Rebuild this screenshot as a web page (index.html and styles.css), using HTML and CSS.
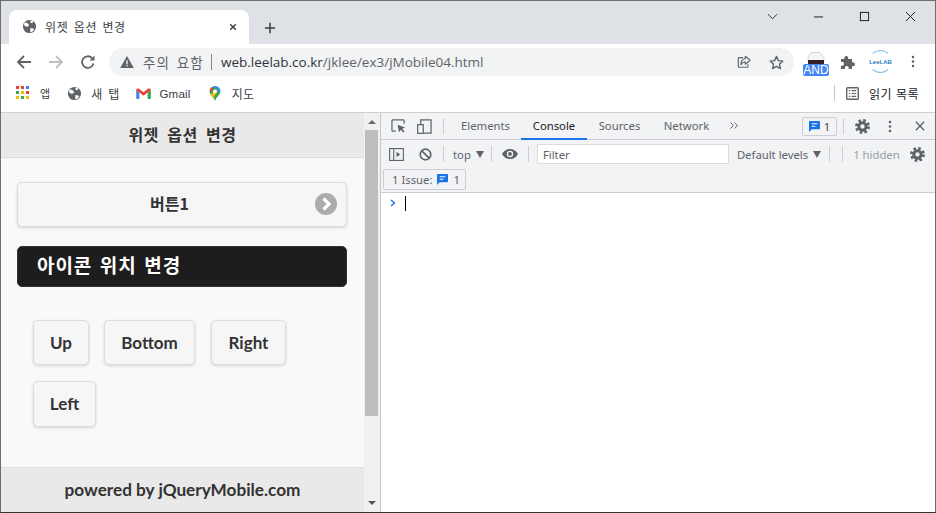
FILE: index.html
```html
<!DOCTYPE html>
<html lang="ko">
<head>
<meta charset="utf-8">
<title>위젯 옵션 변경</title>
<link rel="stylesheet" href="styles.css">
</head>
<body>
<div class="window">
  <div class="titlebar">
    <div class="tab">
      <svg class="ico16" viewBox="0 0 16 16"><circle cx="8" cy="8" r="7" fill="#5f6368"/><path d="M3 3.500l3 1 1.500 1.800-1 1.700-2.200.3L1.800 6zM9 9.500l3 .5 1 1.200-2.500 3-1.800-.5zM9 1.500l3 1-1 2-2-.5z" fill="#fff"/></svg>
      <span class="tab-title">위젯 옵션 변경</span>
      <svg class="tab-close" viewBox="0 0 10 10"><path d="M1.500 1.500l7 7M8.500 1.500l-7 7" stroke="#3c4043" stroke-width="1.800"/></svg>
    </div>
    <svg class="newtab" viewBox="0 0 14 14"><path d="M7 1v12M1 7h12" stroke="#3c4043" stroke-width="1.800"/></svg>
    <div class="win-controls">
      <svg class="win-ico" viewBox="0 0 12 12"><path d="M1 3.500l5 5 5-5" fill="none" stroke="#222" stroke-width="1"/></svg>
      <svg class="win-ico" viewBox="0 0 12 12"><path d="M1 6.500h10" stroke="#111" stroke-width="1"/></svg>
      <svg class="win-ico" viewBox="0 0 12 12"><rect x="1.500" y="1.500" width="9" height="9" fill="none" stroke="#111"/></svg>
      <svg class="win-ico" viewBox="0 0 12 12"><path d="M1 1l10 10M11 1L1 11" stroke="#111" stroke-width="1"/></svg>
    </div>
  </div>

  <div class="toolbar">
    <svg class="nav-ico" viewBox="0 0 16 16"><path d="M15 8H2M8 2L2 8l6 6" fill="none" stroke="#5f6368" stroke-width="1.800"/></svg>
    <svg class="nav-ico" viewBox="0 0 16 16"><path d="M1 8h13M8 2l6 6-6 6" fill="none" stroke="#bdc1c6" stroke-width="1.800"/></svg>
    <svg class="nav-ico" viewBox="0 0 16 16"><path d="M13.500 9.500A5.800 5.800 0 1 1 12 4" fill="none" stroke="#5f6368" stroke-width="1.800"/><path d="M14.500 1.500v5h-5z" fill="#5f6368"/></svg>
    <div class="omnibox">
      <svg class="warn" viewBox="0 0 16 14"><path d="M8 0l8 14H0z" fill="#5f6368"/><path d="M7.200 5h1.600v4.500H7.200zM7.200 10.500h1.600V12H7.200z" fill="#f1f3f4"/></svg>
      <span class="warn-text">주의 요함</span>
      <span class="omni-sep"></span>
      <span class="url"><span class="url-host">web.leelab.co.kr</span>/jklee/ex3/jMobile04.html</span>
      <svg class="share" viewBox="0 0 16 16"><path d="M7 3H2.500a1 1 0 0 0-1 1v9a1 1 0 0 0 1 1h9a1 1 0 0 0 1-1v-2.500" fill="none" stroke="#5f6368" stroke-width="1.300"/><path d="M9.500 1.500L15 6l-5.500 4.500V8C7 8 5.500 9 4.500 11c0-4 2-6.500 5-7z" fill="#f1f3f4" stroke="#5f6368" stroke-width="1.300" stroke-linejoin="round"/></svg>
      <svg class="star" viewBox="0 0 16 16"><path d="M8 1.500l2 4.500 4.800.5-3.600 3.200 1 4.800L8 12.100l-4.200 2.400 1-4.800L1.200 6.500 6 6z" fill="none" stroke="#5f6368" stroke-width="1.500" stroke-linejoin="round"/></svg>
    </div>
    <div class="ext-and">
      <svg class="and-top" viewBox="0 0 26 12"><path d="M8 .5h9l4 5v3H5v-3z" fill="#f6f6f6" stroke="#bbb" stroke-width=".6"/><rect x="5" y="8" width="16" height="4" fill="#33201f"/></svg>
      <span class="and-label">AND</span>
    </div>
    <svg class="puzzle" viewBox="0 0 16 16"><path d="M1 5h3.500a2 2 0 1 1 3.500 0H12v3.500a2 2 0 1 1 0 3.500V15H8.500a2 2 0 1 0-3.500 0H1v-3.500a2 2 0 1 0 0-3.500z" fill="#5f6368"/></svg>
    <div class="leelab"><span>LeeLAB</span></div>
    <svg class="menu-dots" viewBox="0 0 4 16"><circle cx="2" cy="2.500" r="1.500" fill="#5f6368"/><circle cx="2" cy="8" r="1.500" fill="#5f6368"/><circle cx="2" cy="13.500" r="1.500" fill="#5f6368"/></svg>
  </div>

  <div class="bookmarks">
    <svg class="bm-apps" viewBox="0 0 14 14">
      <rect x="0" y="0" width="3" height="3" fill="#ea4335"/><rect x="5" y="0" width="3" height="3" fill="#ea4335"/><rect x="10" y="0" width="3" height="3" fill="#4285f4"/>
      <rect x="0" y="5" width="3" height="3" fill="#34a853"/><rect x="5" y="5" width="3" height="3" fill="#fbbc05"/><rect x="10" y="5" width="3" height="3" fill="#ea4335"/>
      <rect x="0" y="10" width="3" height="3" fill="#fbbc05"/><rect x="5" y="10" width="3" height="3" fill="#34a853"/><rect x="10" y="10" width="3" height="3" fill="#fbbc05"/>
    </svg>
    <span class="bm-text bm-app">앱</span>
    <svg class="ico16 bm-globe" viewBox="0 0 16 16"><circle cx="8" cy="8" r="7" fill="#5f6368"/><path d="M3 3.500l3 1 1.500 1.800-1 1.700-2.200.3L1.800 6zM9 9.500l3 .5 1 1.200-2.500 3-1.800-.5zM9 1.500l3 1-1 2-2-.5z" fill="#fff"/></svg>
    <span class="bm-text bm-new">새 탭</span>
    <svg class="bm-gmail" viewBox="0 0 16 12"><path d="M0 2v9a1 1 0 0 0 1 1h2.500V5z" fill="#4285f4"/><path d="M16 2v9a1 1 0 0 1-1 1h-2.500V5z" fill="#34a853"/><path d="M0 2.500C0 .5 2 0 3.500 1L8 4.500 12.500 1C14 0 16 .5 16 2.500L12.500 5 8 8.500 3.500 5z" fill="#ea4335"/></svg>
    <span class="bm-text bm-gm">Gmail</span>
    <svg class="bm-maps" viewBox="0 0 12 16"><path d="M6 0a5.800 5.800 0 0 1 5.800 5.800C11.800 9.500 7.500 11 6 16 4.500 11 .2 9.500.2 5.800A5.800 5.800 0 0 1 6 0z" fill="#34a853"/><path d="M2 2l8 0a5.800 5.800 0 0 0-8 0z" fill="#4285f4"/><path d="M.2 5.800A5.800 5.800 0 0 1 2 1.600L5 5z" fill="#ea4335"/><path d="M11.800 5.800A5.800 5.800 0 0 0 10 1.600L7 5z" fill="#4285f4"/><path d="M1 9l3-2 3 1-3 5z" fill="#fbbc05"/><circle cx="6" cy="5.800" r="2.100" fill="#fff"/></svg>
    <span class="bm-text bm-map">지도</span>
    <span class="bm-spacer"></span>
    <span class="bm-sep"></span>
    <svg class="bm-read" viewBox="0 0 14 14"><rect x=".75" y=".75" width="12.500" height="12.500" rx="1" fill="none" stroke="#5f6368" stroke-width="1.500"/><path d="M3 4h1.500M6 4h5M3 7h1.500M6 7h5M3 10h1.500M6 10h5" stroke="#5f6368" stroke-width="1.300"/></svg>
    <span class="bm-text bm-read-text">읽기 목록</span>
  </div>

  <div class="content">
    <div class="page-pane">
      <div class="page">
        <header class="page-header">위젯 옵션 변경</header>
        <main class="page-main">
          <button class="btn-wide">버튼1
            <svg class="btn-arrow" viewBox="0 0 22 22"><circle cx="11" cy="11" r="11" fill="#ababab"/><path d="M8.500 5.500L14 11l-5.500 5.500" fill="none" stroke="#fff" stroke-width="3.200"/></svg>
          </button>
          <div class="dark-bar">아이콘 위치 변경</div>
          <div class="btn-group">
            <button class="btn btn-up">Up</button>
            <button class="btn btn-bottom">Bottom</button>
            <button class="btn btn-right">Right</button>
            <button class="btn btn-left">Left</button>
          </div>
        </main>
        <footer class="page-footer">powered by jQueryMobile.com</footer>
      </div>
      <div class="scrollbar">
        <span class="arrow-up"></span>
        <div class="thumb"></div>
        <span class="arrow-down"></span>
      </div>
    </div>

    <div class="devtools">
      <div class="dt-tabs">
        <svg class="dt-inspect" viewBox="0 0 16 16"><path d="M5 13H2a1 1 0 0 1-1-1V2a1 1 0 0 1 1-1h11a1 1 0 0 1 1 1v3" fill="none" stroke="#5f6368" stroke-width="1.300"/><path d="M7 6l8 3-3 1.500 2.500 3-1.500 1-2.500-3L8.500 14z" fill="#5f6368"/></svg>
        <svg class="dt-device" viewBox="0 0 16 16"><rect x=".7" y="6" width="6" height="9.300" fill="none" stroke="#5f6368" stroke-width="1.300"/><path d="M4 6V1h11v14H7" fill="none" stroke="#5f6368" stroke-width="1.300"/></svg>
        <span class="dt-vsep"></span>
        <span class="dt-tab tab-elements">Elements</span>
        <span class="dt-tab dt-tab-active">Console</span>
        <span class="dt-tab tab-sources">Sources</span>
        <span class="dt-tab tab-network">Network</span>
        <svg class="dt-more" viewBox="0 0 9 7"><path d="M.5.500L3.500 3.500.5 6.500M4.500.500L7.500 3.500 4.500 6.500" fill="none" stroke="#5f6368" stroke-width="1"/></svg>
        <span class="dt-grow"></span>
        <span class="dt-badge">
          <svg class="msg" viewBox="0 0 12 12"><path d="M1 0h10a1 1 0 0 1 1 1v7a1 1 0 0 1-1 1H3l-3 3V1a1 1 0 0 1 1-1z" fill="#1a73e8"/><path d="M3 3h6M3 5.800h4" stroke="#fff" stroke-width="1.200"/></svg>
          <span>1</span>
        </span>
        <span class="dt-vsep sep-gear"></span>
        <svg class="gear gear-main" viewBox="0 0 16 16"><circle cx="8" cy="8" r="5.500" fill="#5f6368"/><circle cx="8" cy="8" r="6.500" fill="none" stroke="#5f6368" stroke-width="3" stroke-dasharray="2.700 2.405"/><circle cx="8" cy="8" r="2.300" fill="#f1f3f4"/></svg>
        <svg class="dt-dots" viewBox="0 0 4 16"><circle cx="2" cy="2.500" r="1.600" fill="#5f6368"/><circle cx="2" cy="8" r="1.600" fill="#5f6368"/><circle cx="2" cy="13.500" r="1.600" fill="#5f6368"/></svg>
        <svg class="dt-close" viewBox="0 0 12 12"><path d="M1 1l10 10M11 1L1 11" stroke="#5f6368" stroke-width="1.600"/></svg>
      </div>
      <div class="dt-console-bar">
        <svg class="dt-sidebar" viewBox="0 0 16 14"><rect x=".6" y=".6" width="14.800" height="12.800" fill="none" stroke="#5f6368" stroke-width="1.200"/><path d="M5 1v12" stroke="#5f6368" stroke-width="1.200"/><path d="M8 4l4 3-4 3z" fill="#5f6368"/></svg>
        <svg class="dt-clear" viewBox="0 0 14 14"><circle cx="7" cy="7" r="5.700" fill="none" stroke="#5f6368" stroke-width="1.800"/><path d="M3 3l8 8" stroke="#5f6368" stroke-width="1.800"/></svg>
        <span class="dt-vsep"></span>
        <span class="dt-top">top</span><span class="caret"></span>
        <span class="dt-vsep"></span>
        <svg class="dt-eye" viewBox="0 0 16 10"><path d="M8 0c3.500 0 6.500 2 8 5-1.500 3-4.500 5-8 5s-6.500-2-8-5c1.500-3 4.500-5 8-5z" fill="#5f6368"/><circle cx="8" cy="5" r="3.200" fill="#f1f3f4"/><circle cx="8" cy="5" r="1.900" fill="#5f6368"/></svg>
        <span class="dt-vsep"></span>
        <input class="dt-filter" type="text" placeholder="Filter">
        <span class="dt-levels">Default levels</span><span class="caret"></span>
        <span class="dt-vsep sep-lv"></span>
        <span class="dt-vsep sep-hid"></span>
        <span class="dt-hidden">1 hidden</span>
        <svg class="gear gear-small" viewBox="0 0 16 16"><circle cx="8" cy="8" r="5.500" fill="#5f6368"/><circle cx="8" cy="8" r="6.500" fill="none" stroke="#5f6368" stroke-width="3" stroke-dasharray="2.700 2.405"/><circle cx="8" cy="8" r="2.300" fill="#f1f3f4"/></svg>
      </div>
      <div class="dt-issues">
        <span class="issue-chip">1 Issue:
          <svg class="msg" viewBox="0 0 12 12"><path d="M1 0h10a1 1 0 0 1 1 1v7a1 1 0 0 1-1 1H3l-3 3V1a1 1 0 0 1 1-1z" fill="#1a73e8"/><path d="M3 3h6M3 5.800h4" stroke="#fff" stroke-width="1.200"/></svg>
          1</span>
      </div>
      <div class="dt-console">
        <svg class="prompt" viewBox="0 0 6 8"><path d="M1 1l3.500 3L1 7" fill="none" stroke="#1a73e8" stroke-width="1.400"/></svg>
        <span class="cursor"></span>
      </div>
    </div>
  </div>
</div>
</body>
</html>
```

FILE: styles.css
```css
* { box-sizing: border-box; }
html, body { margin: 0; padding: 0; height: 100%; overflow: hidden; background: #fff; }
body { font-family: "Noto Sans", "Noto Sans CJK KR", sans-serif; }
svg { display: block; flex: none; }
.window { width: 936px; height: 513px; border: 1px solid #6e6e6e; border-bottom-color: #333; display: flex; flex-direction: column; }

/* title bar */
.titlebar { height: 43px; flex: none; background: #dee1e6; display: flex; align-items: flex-end; padding-left: 8px; }
.tab { width: 240px; height: 34px; background: #fff; border-radius: 8px 8px 0 0; display: flex; align-items: center; padding-left: 13px; padding-bottom: 1px; }
.ico16 { width: 15px; height: 15px; }
.tab-title { margin-left: 8px; font: 12px "Noto Sans CJK KR", sans-serif; color: #3c4043; letter-spacing: .6px; word-spacing: 1.500px; flex: 1; }
.tab-close { width: 8px; height: 8px; margin-right: 12px; }
.newtab { width: 12px; height: 12px; margin: 0 0 10px 15px; }
.win-controls { margin-left: auto; align-self: flex-start; display: flex; margin-top: 10px; margin-right: 19px; }
.win-ico { width: 11px; height: 11px; margin-left: 35px; }
.win-ico:first-child { margin-left: 0; }

/* toolbar */
.toolbar { height: 32px; flex: none; background: #fff; display: flex; align-items: center; padding-left: 15px; }
.nav-ico { width: 16px; height: 16px; margin-right: 16px; margin-top: 3px; }
.nav-ico:nth-child(3) { margin-right: 13px; }
.omnibox { width: 685px; height: 28px; margin-top: 4px; background: #f1f3f4; border-radius: 14px; display: flex; align-items: center; padding-left: 11px; }
.warn { width: 14px; height: 12px; margin-top: -1px; }
.warn-text { margin-left: 9px; font: 13.500px "Noto Sans CJK KR", sans-serif; color: #5f6368; letter-spacing: 1.200px; word-spacing: 1.500px; }
.omni-sep { width: 1px; height: 16px; background: #888; margin: 0 9px 0 7px; }
.url { font: 13.500px "Open Sans", sans-serif; color: #5f6368; flex: 1; }
.url-host { color: #303338; }
.share { width: 14px; height: 14px; margin-right: 18px; }
.star { width: 15px; height: 15px; margin-right: 10px; }
.ext-and { width: 26px; margin-left: 9px; margin-top: 7px; display: flex; flex-direction: column; align-items: center; }
.and-top { width: 26px; height: 12px; }
.and-label { width: 26px; height: 12px; background: #4285f4; color: #fff; border-radius: 2px; font: 12px/12px "Liberation Sans", sans-serif; text-align: center; }
.puzzle { width: 16px; height: 16px; margin-left: 11px; margin-top: 3px; }
.leelab { width: 23px; height: 23px; margin-left: 13px; margin-top: 3px; border-radius: 50%; border: 1px solid #8cc4ea; border-left-color: transparent; border-right-color: transparent; background: #fff; display: flex; align-items: center; justify-content: center; }
.leelab span { font: 700 6px "Liberation Sans", sans-serif; color: #2a7fc4; white-space: nowrap; }
.menu-dots { width: 4px; height: 13px; margin-left: 19px; margin-top: 3px; }

/* bookmarks */
.bookmarks { height: 36px; flex: none; background: #fff; display: flex; align-items: center; padding: 0 16px 2px 15px; }
.bm-apps { width: 14px; height: 14px; }
.bm-text { font: 12px "Noto Sans CJK KR", sans-serif; color: #3c4043; letter-spacing: .2px; }
.bm-app { margin-left: 10px; font-size: 11px; }
.bm-globe { margin-left: 17px; }
.bm-new { margin-left: 9px; word-spacing: 2px; }
.bm-gmail { width: 15px; height: 11px; margin-left: 17px; }
.bm-gm { margin-left: 8px; font: 11.600px "Liberation Sans", sans-serif; }
.bm-maps { width: 12px; height: 15px; margin-left: 18px; margin-right: 11px; }
.bm-map { letter-spacing: .2px; }
.bm-spacer { flex: 1; }
.bm-sep { width: 1px; height: 16px; background: #c4c7c5; }
.bm-read { width: 13px; height: 13px; margin-left: 11px; }
.bm-read-text { margin-left: 10px; color: #202124; letter-spacing: .5px; }

/* content */
.content { flex: 1; min-height: 0; display: flex; border-top: 1px solid #d0d0d0; }
.page-pane { width: 380px; flex: none; display: flex; border-right: 1px solid #c8c8c8; }
.page { width: 363px; flex: none; background: #f9f9f9; display: flex; flex-direction: column; }
.page-header { height: 45px; flex: none; background: #e9e9e9; border-bottom: 1px solid #ddd; display: flex; align-items: center; justify-content: center; font: 700 16px "Noto Sans CJK KR", sans-serif; color: #333; letter-spacing: .6px; word-spacing: 3px; padding-bottom: 3px; }
.page-main { flex: 1; padding: 24px 16px 0; }
.btn-wide { position: relative; width: 330px; height: 45px; border: 1px solid #ddd; border-radius: 5px; background: #f6f6f6; box-shadow: 0 1px 3px rgba(0,0,0,.15); font: 700 16px "Noto Sans CJK KR", sans-serif; color: #333; display: block; padding: 0 25px 4px 0; }
.btn-arrow { position: absolute; right: 9px; top: 10px; width: 22px; height: 22px; }
.dark-bar { width: 330px; height: 41px; margin-top: 19px; background: #1d1d1d; border: 1px solid #333; border-radius: 5px; color: #fff; font: 700 19px/36px "Noto Sans CJK KR", sans-serif; padding-left: 19px; letter-spacing: .9px; word-spacing: 1.500px; }
.btn-group { display: flex; flex-wrap: wrap; gap: 16px 15px; padding: 33px 0 0 16px; width: 310px; }
.btn { height: 45px; border: 1px solid #ddd; border-radius: 5px; background: #f6f6f6; box-shadow: 0 1px 3px rgba(0,0,0,.15); font: 700 17px "Lato", "Noto Sans", sans-serif; color: #333; padding: 0 0 1px; }
.btn-up { width: 56px; }
.btn-bottom { width: 91px; }
.btn-right { width: 75px; margin-left: 1px; }
.btn-left { width: 63px; height: 46px; padding-bottom: 2px; }
.page-footer { height: 45px; flex: none; background: #e9e9e9; border-top: 1px solid #ddd; display: flex; align-items: center; justify-content: center; font: 700 17.200px "Lato", "Noto Sans", sans-serif; color: #333; padding-bottom: 2px; }

.scrollbar { flex: 1; background: #f1f1f1; display: flex; flex-direction: column; align-items: flex-start; }
.thumb { width: 13px; height: 286px; margin: 6px 0 0 1px; background: #bdbdbd; }
.arrow-up { margin: 7px 0 0 4px; width: 0; height: 0; border: 4px solid transparent; border-top: 0; border-bottom: 4px solid #6a6a6a; }
.arrow-down { margin: auto 0 7px 4px; width: 0; height: 0; border: 4px solid transparent; border-bottom: 0; border-top: 4px solid #555; }

/* devtools */
.devtools { flex: 1; min-width: 0; display: flex; flex-direction: column; background: #fff; color: #5f6368; font: 11.300px "Noto Sans", sans-serif; }
.dt-tabs { height: 27px; flex: none; background: #f1f3f4; border-bottom: 1px solid #cbcdd1; display: flex; align-items: center; padding: 0 10px; }
.dt-inspect { width: 15px; height: 15px; }
.dt-device { width: 15px; height: 15px; margin-left: 11px; }
.dt-vsep { width: 1px; height: 16px; background: #cbcdd1; flex: none; }
.dt-tabs > .dt-vsep:nth-child(3) { margin-left: 11px; }
.dt-tab { height: 27px; line-height: 26px; color: #5f6368; text-align: center; flex: none; }
.tab-elements { margin-left: 6px; width: 71px; }
.dt-tab-active { width: 66px; color: #202124; box-shadow: inset 0 -2px 0 #1a73e8; }
.tab-sources { width: 65px; }
.tab-network { width: 69px; }
.dt-more { width: 9px; height: 7px; margin-left: 9px; margin-bottom: 1px; }
.dt-grow { flex: 1; }
.dt-badge { width: 35px; height: 19px; border: 1px solid #cbcdd1; border-radius: 2px; display: flex; align-items: center; justify-content: center; gap: 4px; color: #444; }
.msg { width: 11px; height: 11px; }
.sep-gear { margin: 0 0 0 6px; }
.gear { width: 15px; height: 15px; }
.gear-main { margin-left: 11px; }
.dt-dots { width: 4px; height: 13px; margin-left: 18px; }
.dt-close { width: 10px; height: 10px; margin-left: 23px; }

.dt-console-bar { height: 28px; flex: none; background: #f1f3f4; display: flex; align-items: center; padding: 0 10px 0 8px; }
.dt-sidebar { width: 15px; height: 13px; }
.dt-clear { width: 13px; height: 13px; margin-left: 15px; margin-right: 11px; }
.dt-top { margin-left: 9px; }
.caret { width: 0; height: 0; border: 4px solid transparent; border-bottom: 0; border-top: 7px solid #5f6368; margin-left: 5px; margin-right: 7px; }
.dt-eye { width: 16px; height: 10px; margin: 0 10px; }
.dt-filter { width: 192px; height: 20px; margin-left: 8px; border: 1px solid #dadce0; background: #fff; font: 11.300px "Noto Sans", sans-serif; padding: 0 5px; border-radius: 0; }
.dt-filter::placeholder { color: #5f6368; opacity: 1; }
.dt-levels { margin-left: 8px; }
.sep-lv { margin-left: 1px; }
.sep-hid { margin-left: 12px; }
.dt-hidden { margin-left: 10px; color: #9aa0a6; }
.gear-small { margin-left: auto; }

.dt-issues { height: 25px; flex: none; background: #f1f3f4; border-bottom: 1px solid #cbcdd1; padding: 1px 2px 0; }
.issue-chip { display: inline-flex; align-items: center; gap: 5px; height: 21px; width: 83px; justify-content: center; border: 1px solid #cbcdd1; border-radius: 2px; padding-left: 3px; }
.dt-console { flex: 1; padding: 3px 0 0 9px; display: flex; align-items: flex-start; }
.prompt { width: 6px; height: 8px; margin-top: 3px; }
.cursor { width: 1px; height: 15px; background: #000; margin-left: 9px; }
```
